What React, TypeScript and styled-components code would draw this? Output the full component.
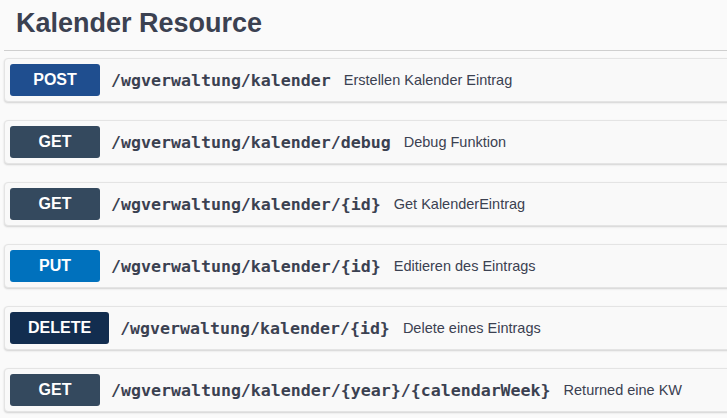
import React from "react";
import styled, { createGlobalStyle } from "styled-components";

const GlobalStyle = createGlobalStyle`
  html, body {
    margin: 0;
    padding: 0;
    background: #fafafa;
  }
  body {
    font-family: "Liberation Sans", Arial, sans-serif;
    color: #3b4151;
  }
`;

type Method = "POST" | "GET" | "PUT" | "DELETE";

const methodColors: Record<Method, string> = {
  POST: "#1f4e8f",
  GET: "#34495e",
  PUT: "#0071bd",
  DELETE: "#122d4f",
};

const Page = styled.div`
  width: 727px;
  height: 418px;
  overflow: hidden;
  padding-left: 4px;
  box-sizing: border-box;
`;

const Header = styled.h2`
  margin: 0;
  padding: 10px 0 13px 12px;
  width: 800px;
  font-family: "Liberation Sans", Arial, sans-serif;
  font-weight: bold;
  font-size: 27px;
  line-height: 27px;
  color: #3b4151;
  border-bottom: 1px solid #cfcfcf;
`;

const List = styled.div`
  display: flex;
  flex-direction: column;
  gap: 18px;
  padding-top: 7px;
`;

const Card = styled.div`
  display: flex;
  align-items: center;
  width: 800px;
  box-sizing: border-box;
  padding: 5px;
  background: #f9f9f9;
  border: 1px solid #e4e4e4;
  border-radius: 4px;
  box-shadow: 0 1px 2px rgba(0, 0, 0, 0.16);
`;

const Badge = styled.span<{ $method: Method }>`
  display: inline-flex;
  align-items: center;
  justify-content: center;
  box-sizing: border-box;
  min-width: 90px;
  height: 32px;
  padding: 0 18px;
  border-radius: 3px;
  background: ${(p) => methodColors[p.$method]};
  color: #fff;
  font-family: "Liberation Sans", Arial, sans-serif;
  font-weight: bold;
  font-size: 16px;
`;

const Path = styled.span`
  margin-left: 11px;
  font-family: "DejaVu Sans Mono", "Liberation Mono", monospace;
  font-weight: bold;
  font-size: 16.6px;
  color: #3b4151;
`;

const Description = styled.span`
  margin-left: 13px;
  font-family: "Liberation Sans", Arial, sans-serif;
  font-size: 14.5px;
  color: #3b4151;
`;

const ops: { method: Method; path: string; desc: string }[] = [
  { method: "POST", path: "/wgverwaltung/kalender", desc: "Erstellen Kalender Eintrag" },
  { method: "GET", path: "/wgverwaltung/kalender/debug", desc: "Debug Funktion" },
  { method: "GET", path: "/wgverwaltung/kalender/{id}", desc: "Get KalenderEintrag" },
  { method: "PUT", path: "/wgverwaltung/kalender/{id}", desc: "Editieren des Eintrags" },
  { method: "DELETE", path: "/wgverwaltung/kalender/{id}", desc: "Delete eines Eintrags" },
  {
    method: "GET",
    path: "/wgverwaltung/kalender/{year}/{calendarWeek}",
    desc: "Returned eine KW",
  },
];

export default function App() {
  return (
    <>
      <GlobalStyle />
      <Page>
        <Header>Kalender Resource</Header>
        <List>
          {ops.map((op, i) => (
            <Card key={i}>
              <Badge $method={op.method}>{op.method}</Badge>
              <Path>{op.path}</Path>
              <Description>{op.desc}</Description>
            </Card>
          ))}
        </List>
      </Page>
    </>
  );
}
